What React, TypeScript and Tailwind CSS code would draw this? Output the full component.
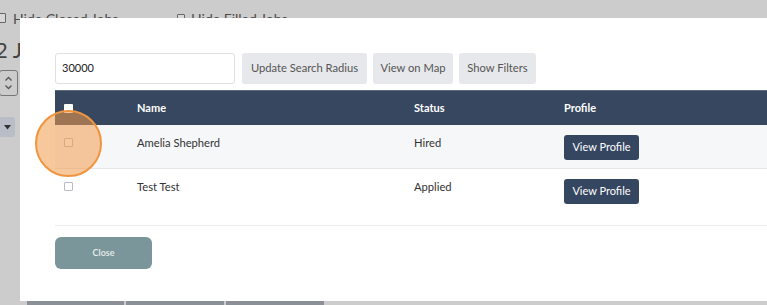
import React from "react";

const font = { fontFamily: "Lato, 'Open Sans', sans-serif" };

function Box({ className = "" }: { className?: string }) {
  return <span className={`block w-[9px] h-[9px] border border-[#b9bcc1] bg-white rounded-[1px] ${className}`} />;
}

export default function App() {
  const rows = [
    { name: "Amelia Shepherd", status: "Hired", bg: "bg-[#f6f7f9]" },
    { name: "Test Test", status: "Applied", bg: "bg-white" },
  ];
  return (
    <div className="relative w-[767px] h-[305px] overflow-hidden bg-[#cccccc] text-[#4d4d4d]" style={font}>
      {/* background page (dimmed) */}
      <div className="flex flex-col">
        <div className="flex items-center h-[30px] pt-[6px] text-[14px]">
          <span className="block w-[8px] h-[10px] ml-[-2px] border border-[#666] bg-[#d8d8d8] rounded-[1px]" />
          <span className="ml-[7px] w-[164px]">Hide Closed Jobs</span>
          <span className="block w-[8px] h-[9px] border border-[#666] bg-[#d8d8d8] rounded-[1px]" />
          <span className="ml-[6px]">Hide Filled Jobs</span>
        </div>
        <div className="h-[38px] flex items-center text-[22px] text-[#444] ml-[-5px]">2 J</div>
        <div className="mt-[2px] ml-[-1px] w-[19px] h-[26px] border border-[#777] rounded-[3px] flex flex-col items-center justify-center text-[#555]">
          <svg width="9" height="14" viewBox="0 0 9 14" fill="none" stroke="#555" strokeWidth="1.3">
            <path d="M1.5 4.5L4.5 1.5L7.5 4.5" />
            <path d="M1.5 9.5L4.5 12.5L7.5 9.5" />
          </svg>
        </div>
        <div className="mt-[21px] w-[15px] h-[20px] bg-[#b9bdc7] rounded-r-[3px] flex items-center justify-center">
          <svg width="7" height="5" viewBox="0 0 7 5"><path d="M0 0H7L3.5 4.5Z" fill="#333" /></svg>
        </div>
      </div>
      <div className="absolute left-0 top-[301px] w-full h-[4px] flex gap-[2px] pl-[27px]">
        <span className="block w-[97px] h-full bg-[#8b8f96]" />
        <span className="block w-[98px] h-full bg-[#8b8f96]" />
        <span className="block w-[98px] h-full bg-[#8b8f96]" />
      </div>

      {/* modal */}
      <div className="absolute left-[20px] top-[18px] w-[760px] h-[283px] bg-white">
        <div className="pl-[35px] pt-[35px]">
          <div className="flex items-center gap-[6px] h-[31px]">
            <div className="w-[180px] h-[31px] border border-[#e0e0e0] rounded-[3px] flex items-center pl-[6px] text-[11px] text-[#222] mr-[1px]">
              30000
            </div>
            <div className="w-[125px] h-[31px] bg-[#e6e8eb] rounded-[3px] flex items-center justify-center text-[11.2px] text-[#555]">
              Update Search Radius
            </div>
            <div className="w-[80px] h-[31px] bg-[#e6e8eb] rounded-[3px] flex items-center justify-center text-[11.2px] text-[#555]">
              View on Map
            </div>
            <div className="w-[77px] h-[31px] bg-[#e6e8eb] rounded-[3px] flex items-center justify-center text-[11.2px] text-[#555]">
              Show Filters
            </div>
          </div>

          <div className="mt-[6px]">
            <div className="grid grid-cols-[82px_277px_150px_1fr] h-[35px] items-center bg-[#37475f] text-white text-[11px] font-bold border-t border-[#5b6a80]">
              <div className="pl-[9px]">
                <span className="block w-[9px] h-[9px] bg-white rounded-[1px]" />
              </div>
              <div>Name</div>
              <div>Status</div>
              <div>Profile</div>
            </div>
            {rows.map((r, i) => (
              <div
                key={i}
                className={`grid grid-cols-[82px_277px_150px_1fr] h-[44px] ${r.bg} text-[11.2px] text-[#333] ${i === 0 ? "border-b border-[#e4e6e9]" : ""}`}
              >
                <div className="pl-[9px] pt-[13px]">
                  <Box />
                </div>
                <div className="pt-[9px] leading-[18px]">{r.name}</div>
                <div className="pt-[9px] leading-[18px]">{r.status}</div>
                <div className="pt-[10px]">
                  <div className="w-[75px] h-[25px] bg-[#354661] rounded-[3px] flex items-center justify-center text-white text-[11px]">
                    View Profile
                  </div>
                </div>
              </div>
            ))}
          </div>

          <div className="mt-[12px] border-t border-[#ececec]" />
          <div className="mt-[11px] w-[97px] h-[32px] bg-[#7b969b] rounded-[6px] flex items-center justify-center text-[9px] font-semibold text-[#e8eeee]">
            Close
          </div>
        </div>
      </div>

      {/* click highlight */}
      <div className="absolute left-[35px] top-[110px] w-[67px] h-[67px] rounded-full bg-[#f39a4c]/55 border-[2.5px] border-[#f0953f]" />
    </div>
  );
}
